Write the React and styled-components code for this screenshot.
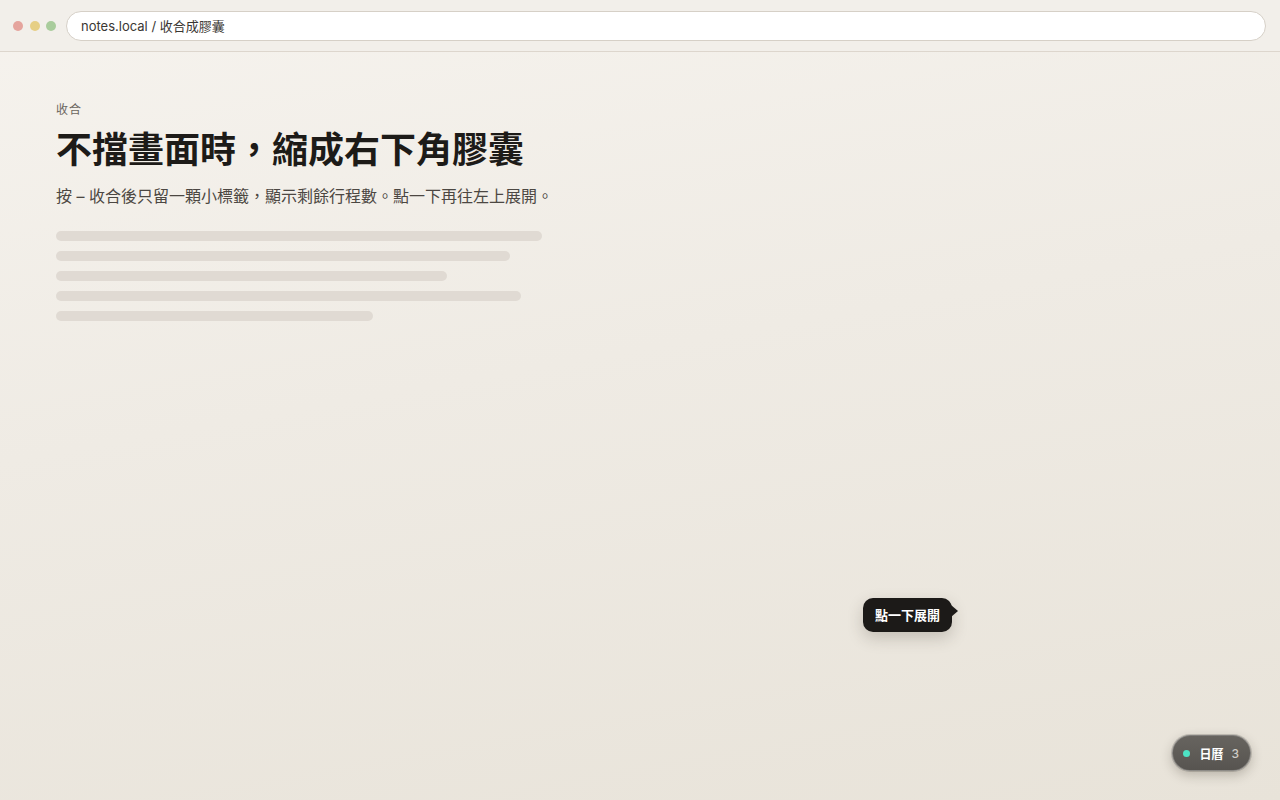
import React from 'react';
import styled, { createGlobalStyle } from 'styled-components';

const Global = createGlobalStyle`
  html, body { margin: 0; padding: 0; }
  body {
    font-family: Inter, "Noto Sans CJK TC", "Noto Sans", sans-serif;
    background: #ece7df;
  }
`;

const Page = styled.div`
  width: 1280px;
  height: 800px;
  display: flex;
  flex-direction: column;
  overflow: hidden;
  position: relative;
  background: linear-gradient(170deg, #f6f3ee 0%, #efebe4 45%, #e8e3d9 100%);
`;

const Chrome = styled.div`
  height: 51px;
  border-bottom: 1px solid #ddd6cd;
  background: #f2efea;
  display: flex;
  align-items: center;
  padding: 0 14px 0 13px;
`;

const Dots = styled.div`
  display: flex;
  gap: 6.5px;
  margin-right: 10px;
`;

const Dot = styled.span`
  width: 10px;
  height: 10px;
  border-radius: 50%;
  background: ${p => p.$c};
`;

const Address = styled.div`
  flex: 1;
  height: 28px;
  border: 1px solid #d6d0c7;
  border-radius: 15px;
  background: #fff;
  display: flex;
  align-items: center;
  padding-left: 14px;
  font-size: 13px;
  color: #3a3733;
`;

const Main = styled.main`
  flex: 1;
  padding: 50px 56px 0;
`;

const Eyebrow = styled.div`
  font-size: 12px;
  color: #6b655e;
  letter-spacing: 1px;
  line-height: 16px;
`;

const Title = styled.h1`
  margin: 8px 0 0;
  font-size: 36px;
  font-weight: 700;
  color: #1d1b18;
  line-height: 48px;
`;

const Sub = styled.p`
  margin: 10px 0 0;
  font-size: 16px;
  color: #4c4742;
  line-height: 24px;
`;

const Lines = styled.div`
  margin-top: 23px;
  display: flex;
  flex-direction: column;
  gap: 10px;
`;

const Line = styled.div`
  height: 10px;
  border-radius: 5px;
  background: #e0dad3;
`;

const Tip = styled.div`
  position: absolute;
  left: 863px;
  top: 598px;
  height: 34px;
  padding: 0 12px 1px;
  box-sizing: border-box;
  border-radius: 10px;
  background: #1c1a18;
  color: #fff;
  font-size: 13px;
  font-weight: 700;
  display: flex;
  align-items: center;
  box-shadow: 0 6px 16px rgba(60, 50, 40, 0.22);
  &::after {
    content: '';
    position: absolute;
    right: -6px;
    top: 7px;
    border-left: 7px solid #1c1a18;
    border-top: 6px solid transparent;
    border-bottom: 6px solid transparent;
  }
`;

const Pill = styled.button`
  position: absolute;
  right: 29px;
  bottom: 29px;
  height: 36px;
  padding: 0 11px 0 10px;
  border-radius: 18px;
  border: 1px solid rgba(255, 255, 255, 0.25);
  background: linear-gradient(180deg, #67645f 0%, #575450 100%);
  box-shadow: 0 4px 12px rgba(40, 30, 20, 0.25), 0 0 0 1px rgba(0,0,0,0.15);
  display: flex;
  align-items: center;
  font-family: inherit;
  cursor: pointer;
`;

const Live = styled.span`
  width: 7px;
  height: 7px;
  border-radius: 50%;
  background: #4de3c4;
  margin-right: 9px;
`;

const PillLabel = styled.span`
  color: #fff;
  font-weight: 700;
  font-size: 12px;
  margin-right: 8px;
`;

const Count = styled.span`
  color: #cfcbc5;
  font-size: 12px;
  font-weight: 500;
`;

const widths = [486, 454, 391, 465, 317];

export default function App() {
  return (
    <>
      <Global />
      <Page>
        <Chrome>
          <Dots>
            <Dot $c="#e5a49d" />
            <Dot $c="#e6cf85" />
            <Dot $c="#a9cc9c" />
          </Dots>
          <Address>notes.local / 收合成膠囊</Address>
        </Chrome>
        <Main>
          <Eyebrow>收合</Eyebrow>
          <Title>不擋畫面時，縮成右下角膠囊</Title>
          <Sub>按 – 收合後只留一顆小標籤，顯示剩餘行程數。點一下再往左上展開。</Sub>
          <Lines>
            {widths.map((w, i) => (
              <Line key={i} style={{ width: w }} />
            ))}
          </Lines>
        </Main>
        <Tip>點一下展開</Tip>
        <Pill>
          <Live />
          <PillLabel>日曆</PillLabel>
          <Count>3</Count>
        </Pill>
      </Page>
    </>
  );
}
